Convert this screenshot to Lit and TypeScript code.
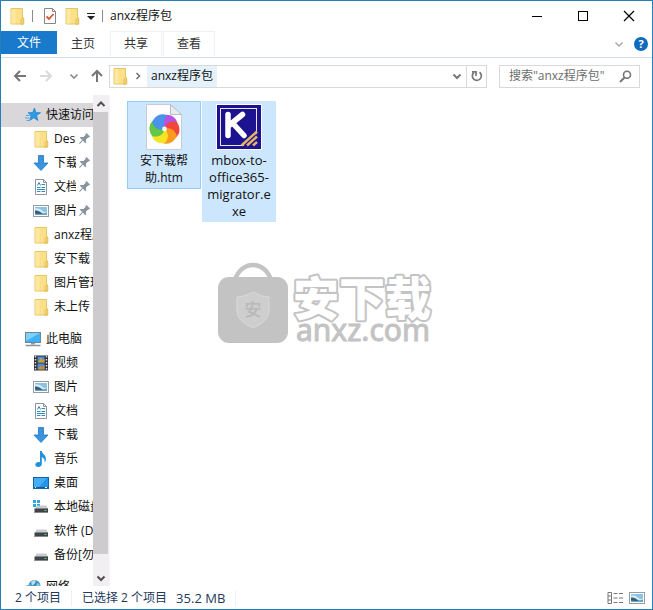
import { LitElement, html, css, svg, nothing, TemplateResult } from "lit";
import { customElement } from "lit/decorators.js";
import { classMap } from "lit/directives/class-map.js";

const icon = (w: number, h: number, body: unknown, vb = `0 0 ${w} ${h}`) =>
  html`<svg class="icon" width=${w} height=${h} viewBox=${vb} aria-hidden="true">${body}</svg>`;

const folder = () =>
  icon(16, 18, svg`
    <path d="M2 1.500H13.500V10l1 1v6H2Z" fill="#fbe08a" stroke="#e5c566"/>
    <path d="M2.500 2h4v14.500h-4Z" fill="#fde8a0"/>
    <path d="M12 17.500V12.500l1.500-1.800 1.300 1v5.300Z" fill="#f4d272" stroke="#dcb957" stroke-width=".8"/>`);

const star = () =>
  icon(16, 16, svg`
    <path d="M9.500 1l1.300 4.500 4.700.3-3.900 2.700 1.300 5-4-2.800-4.300 2.800 1.500-4.800L3 5.700l4.700-.2Z" fill="#2f9be6" stroke="#1b7cc4" stroke-width=".7"/>
    <path d="M1 8.500h3.500M0 11h4M1.500 13.500h2.500M3 6.500h2" stroke="#45a8e8" stroke-width="1"/>`);

const download = () =>
  icon(16, 18, svg`<path d="M5.500 1.500h5v7.500h4.500L8 16.500.9 9h4.600Z" fill="#3a93de" stroke="#2477bd" stroke-width=".8"/>`);

const documentIcon = () =>
  icon(16, 18, svg`
    <path d="M2.500 1.500h8l3 3v12h-11Z" fill="#fff" stroke="#8d949b"/>
    <path d="M10.500 1.500v3h3" fill="none" stroke="#8d949b"/>
    <path d="M4.500 7.500l1.500-3 1.500 3M8.500 6.500h3.500M4 9.500h3.500M8.500 9.500H12M4 11.500h8M4 13.500h3.500M8.500 13.500H12" fill="none" stroke="#2f8abb"/>`);

const picture = () =>
  icon(16, 14, svg`
    <rect x=".5" y="1.500" width="15" height="11" fill="#fff" stroke="#949ca4"/>
    <path d="M2 3h12v8H2Z" fill="#8cc2e8"/>
    <path d="M2 4.500q4-1 7 2t5 1V11H2Z" fill="#d6e9f3"/>
    <path d="M2 6.500q3-.5 6 2t6 0V11H2Z" fill="#2c5f7c"/>
    <path d="M2 9.500q6 1 12-.5V11H2Z" fill="#6fa3bd"/>`);

const computer = () =>
  icon(18, 16, svg`
    <rect x="1.500" y="1.500" width="15" height="10" fill="#3fb2f3" stroke="#6d8494"/>
    <path d="M2 2h14L2 10Z" fill="#7fd0fa"/>
    <path d="M7 12h4v1.500H7Z" fill="#7fa6bd"/>
    <path d="M1.500 14.500h15" stroke="#8c9399" stroke-width="1.500"/>`);

const video = () =>
  icon(16, 16, svg`
    <path d="M1 .5h14v15H1Z" fill="#2c2f36"/>
    <path d="M2.500 1v14M13.500 1v14" stroke="#d9dce0" stroke-width="1.500" stroke-dasharray="1.500 1.500"/>
    <path d="M4.500 1.500h7v6h-7Z" fill="#4c8dd6"/><path d="M4.500 8.500h7v6h-7Z" fill="#4c8dd6"/>
    <path d="M5 7l3-4.500L10 5l1.500-1v3.500H5Z" fill="#d19d3c"/>
    <path d="M5 14l2-3.500L9 12l2.500-2v4.500H5Z" fill="#c58c3a"/>`);

const music = () =>
  icon(16, 18, svg`
    <path d="M7 1h1.800c.3 3.500 5.200 4 4 9.500-.4 1-.8 1.500-1.300 2 .8-3-.8-4.500-2.700-5.200V14c0 1.800-1.700 3-3.600 3S2.300 16 2.300 14.500 4 12 5.700 12c.5 0 .9 0 1.300.2Z" fill="#1e90dc"/>`);

const desktop = () =>
  icon(16, 14, svg`
    <rect x=".5" y="1.500" width="15" height="11" fill="#1f96ec" stroke="#1464a8"/>
    <path d="M1 2h13L6 11H1Z" fill="#45adf5"/><path d="M1 11.500h14" stroke="#125a98"/>
    <path d="M2 11.500h1M12 11.500h2" stroke="#fff"/>`);

const drive = (system = false) =>
  icon(16, 18, svg`
    ${system ? svg`<path d="M0 2h3v3H0ZM4 2h3v3H4ZM0 6h3v3H0ZM4 6h3v3H4Z" fill="#2ba9dc"/>` : nothing}
    <path d="M3.500 7.500h10l1.500 3.500H2Z" fill="#c9cccf"/>
    <path d="M1.500 10.500h13.500v4.500H1.500Z" fill="#3f4347"/>
    <path d="M1.500 14.500h13.500" stroke="#85898d"/><path d="M11.500 12.500h2" stroke="#56dd6b"/>`);

const network = () =>
  icon(16, 16, svg`
    <circle cx="9.500" cy="7" r="6" fill="#3d8fc0"/>
    <path d="M6 3q3-2.500 5-1.500L9.500 5 7 6.500Z" fill="#b9def0"/><path d="M12 4l2.500 1v4l-3-2Z" fill="#8cc8e4"/>
    <path d="M0 7l6-2v6H0Z" fill="#5faed8"/>`);

const pin = () =>
  icon(12, 12, svg`
    <g transform="rotate(45 6 6)" fill="#8a949e"><path d="M3.500 0h5v1.500L7.800 2v3L10 7v1H2V7l2.200-2V2l-.7-.5Z"/><path d="M5.500 8h1v4.500h-1Z"/></g>`);

const chevron = (dir: "up" | "down" | "right", color: string, weight = 2) => {
  const d = { up: "M1.500 7 5 3.500 8.500 7", down: "M1.500 3.500 5 7 8.500 3.500", right: "M3.500 2 6.500 5 3.500 8" }[dir];
  return icon(10, 10, svg`<path d=${d} fill="none" stroke=${color} stroke-width=${weight}/>`);
};

const arrow = (angle: number, color: string) =>
  icon(14, 14, svg`<path transform="rotate(${angle} 7 7)" d="M13 7H2M7 2 2 7l5 5" fill="none" stroke=${color} stroke-width="2"/>`);

const checkedPage = () =>
  icon(14, 18, svg`
    <path d="M1.500 1.500h8l3 3v12h-11Z" fill="#fff" stroke="#868686"/><path d="M9.500 1.500v3h3" fill="none" stroke="#868686"/>
    <path d="M3.500 9.500l2.500 2.500 4.500-5" fill="none" stroke="#d9552b" stroke-width="1.800"/>`);

const petals = ["#b653e2", "#f2453c", "#fa9a1e", "#f7e224", "#62c743", "#4b93ea"];

const htmFile = () =>
  icon(36, 46, svg`
    <path d="M.5.5h24l11 10v35H.5Z" fill="#fdfdfd" stroke="#c6ccd2"/>
    <path d="M24.500.5v10h11Z" fill="#e9ecef" stroke="#b8bfc6"/>
    ${petals.map((c, i) => svg`<path transform="translate(18.500 25) rotate(${i * 60 + 8})" d="M0 0C-5-3-6-9-2-14 5-16 12-12 12-6 8-7 4-5 0 0Z" fill=${c}/>`)}
    <circle cx="18.500" cy="25" r="2.400" fill="#fff"/>`);

const exeFile = () =>
  icon(46, 46, svg`
    <rect width="46" height="46" fill="#fff"/><rect x="1" y="1" width="44" height="44" fill="#1d1390"/>
    <rect x="4.500" y="4.500" width="36" height="37" fill="none" stroke="#e8e6f5"/>
    <path d="M12 10.500v21M26.500 10.500 13 21.500M17 19.500l11 12" fill="none" stroke="#fff" stroke-width="5.500" stroke-linecap="round"/>
    <path d="M24 45 45 26v19H24Z" fill="#1d1390"/>
    <path d="M25.500 41.500 41 27.500M31 41.500l10-9M37 41.500l4-3.500" stroke="#e3b368" stroke-width="2.500"/>`);

interface NavItem { label: string; glyph: () => TemplateResult; pinned?: boolean }
interface NavGroup { label: string; glyph: () => TemplateResult; current?: boolean; items: NavItem[] }

const groups: NavGroup[] = [
  { label: "快速访问", glyph: star, current: true, items: [
    { label: "Desktop", glyph: folder, pinned: true },
    { label: "下载", glyph: download, pinned: true },
    { label: "文档", glyph: documentIcon, pinned: true },
    { label: "图片", glyph: picture, pinned: true },
    { label: "anxz程序包", glyph: folder },
    { label: "安下载", glyph: folder },
    { label: "图片管理", glyph: folder },
    { label: "未上传", glyph: folder },
  ] },
  { label: "此电脑", glyph: computer, items: [
    { label: "视频", glyph: video },
    { label: "图片", glyph: picture },
    { label: "文档", glyph: documentIcon },
    { label: "下载", glyph: download },
    { label: "音乐", glyph: music },
    { label: "桌面", glyph: desktop },
    { label: "本地磁盘", glyph: () => drive(true) },
    { label: "软件 (D:)", glyph: () => drive() },
    { label: "备份[勿删]", glyph: () => drive() },
  ] },
  { label: "网络", glyph: network, items: [] },
];

const files = [
  { lines: ["安下载帮", "助.htm"], glyph: htmFile, focused: true },
  { lines: ["mbox-to-", "office365-", "migrator.e", "xe"], glyph: exeFile, focused: false, latin: true },
];

@customElement("app-root")
export class AppRoot extends LitElement {
  static styles = css`
    :host {
      display: flex; flex-direction: column; box-sizing: border-box; height: 100vh;
      border: 1px solid #2380b8; background: #fff; color: #111; overflow: hidden;
      font: 12px/16px "Open Sans", "Noto Sans CJK SC", sans-serif;
    }
    * { box-sizing: border-box; }
    button, input { font: inherit; color: inherit; margin: 0; padding: 0; border: 0; background: none; }
    button { display: flex; align-items: center; justify-content: center; }
    a { color: inherit; text-decoration: none; }
    .icon { display: block; flex: none; }

    .title { display: flex; align-items: center; height: 30px; padding-left: 8px; flex: none; }
    .title .divider { width: 1px; height: 12px; background: #8a8a8a; }
    .quick { display: flex; align-items: center; gap: 7px; }
    .quick .page { margin-left: 3px; }
    .name { margin: 0 0 0 7px; font: inherit; flex: 1; }
    .window { width: 46px; height: 30px; }

    .ribbon { display: flex; height: 27px; flex: none; border-bottom: 1px solid #d5dee6; }
    .tab { width: 52px; height: 25px; margin-left: 1px; border: 1px solid #eef0f3; border-bottom: 0; color: #333; }
    .tab.file { width: 56px; height: 23px; border: 0; background: #1979ca; color: #fff; margin: 0; }
    .tab.home { border-color: transparent; margin: 0; }
    .ribbon .end { display: flex; align-items: center; gap: 10px; margin-left: auto; padding-right: 4px; }

    .bar { display: flex; align-items: center; height: 36px; flex: none; padding: 0 12px; }
    .steps { display: flex; align-items: center; width: 96px; gap: 12px; }
    .steps .recent { margin-left: 4px; }
    .steps .up { margin-left: -1px; }
    .address { display: flex; align-items: center; flex: 1; min-width: 0; height: 23px; border: 1px solid #d9d9d9; padding-left: 2px; }
    .sep { margin-left: 5px; }
    .crumb { display: flex; align-items: center; height: 21px; padding: 0 4px; margin-left: 4px; background: #e5f1fb; }
    .address .more { margin-left: auto; width: 19px; height: 21px; }
    .address .refresh { width: 20px; height: 21px; border-left: 1px solid #d9d9d9; }
    .search { display: flex; align-items: center; width: 141px; height: 23px; margin-left: 12px; padding: 0 7px 0 9px; border: 1px solid #d9d9d9; }
    .search input { flex: 1; min-width: 0; outline: 0; }
    .search input::placeholder { color: #6d6d6d; opacity: 1; }

    .main { display: flex; flex: 1; min-height: 0; padding-top: 1px; }
    .nav { width: 92px; padding-top: 8px; overflow: hidden; flex: none; }
    .group { margin-bottom: 8px; }
    .row { display: flex; align-items: center; height: 24px; padding-left: 32px; gap: 5px; white-space: nowrap; overflow: hidden; }
    .row.head { padding-left: 24px; }
    .row.current { background: #d9d7d9; }
    .row .glyph { display: flex; justify-content: center; width: 16px; flex: none; }
    .row .label { min-width: 0; overflow: hidden; }
    .row .label.short { width: 22px; }
    .row .pin { margin-left: -3px; }
    .scroll { display: flex; flex-direction: column; width: 16px; background: #f1eff1; flex: none; }
    .scroll button { height: 17px; width: 15px; flex: none; }
    .thumb { flex: 1; width: 15px; margin-bottom: 15px; background: #cdcbcd; }

    .pane { position: relative; flex: 1; min-width: 0; border-left: 1px solid #f5f5f5; padding: 6px 17px; }
    .files { display: flex; flex-wrap: wrap; align-items: flex-start; gap: 1px; }
    .item { flex-direction: column; width: 74px; padding: 3px 0 2px; background: #cce6fd; border: 1px solid #cce6fd; border-width: 0 1px; line-height: 17px; }
    .item.focused { border: 1px solid #98cdf3; padding: 2px 0; }
    .item .caption { margin-top: 2px; }
    .latin { font-size: 13px; }
    .mark { position: absolute; left: 107px; top: 166px; }
    .mark text { font-family: "Noto Sans", "Noto Sans CJK SC", sans-serif; }
    .mark .outlined { paint-order: stroke; }

    .status { display: flex; align-items: center; height: 23px; flex: none; padding: 0 7px 0 14px; color: #1e395b; }
    .status .count { padding-right: 10px; border-right: 1px solid #f0f0f0; margin-right: 10px; }
    .status .size { margin-left: 9px; padding-right: 10px; border-right: 1px solid #f0f0f0; }
    .status .views { display: flex; gap: 6px; margin-left: auto; }
  `;

  private row(item: NavItem) {
    return html`<a class="row" href="#">
      <span class="glyph">${item.glyph()}</span>
      <span class=${classMap({ label: true, short: !!item.pinned })}>${item.label}</span>
      ${item.pinned ? html`<span class="pin">${pin()}</span>` : nothing}
    </a>`;
  }

  render() {
    return html`
      <header class="title">
        <div class="quick">
          ${folder()}<span class="divider"></span>
          <button class="page" aria-label="属性">${checkedPage()}</button>
          <button aria-label="新建文件夹">${folder()}</button>
          <button aria-label="自定义">${icon(8, 10, svg`<path d="M0 2.500h8" stroke="#222"/><path d="M0 5h8L4 9Z" fill="#222"/>`)}</button>
          <span class="divider"></span>
        </div>
        <h1 class="name">anxz程序包</h1>
        <button class="window" aria-label="最小化">${icon(12, 12, svg`<path d="M1 6.500h10" stroke="#000"/>`)}</button>
        <button class="window" aria-label="最大化">${icon(12, 12, svg`<rect x="1.500" y="1.500" width="9" height="9" fill="none" stroke="#000"/>`)}</button>
        <button class="window" aria-label="关闭">${icon(12, 12, svg`<path d="M1 1l10 10M11 1 1 11" stroke="#000" stroke-width="1.200"/>`)}</button>
      </header>

      <nav class="ribbon">
        <button class="tab file">文件</button>
        <button class="tab home">主页</button>
        <button class="tab">共享</button>
        <button class="tab">查看</button>
        <div class="end">
          <button aria-label="展开功能区">${chevron("down", "#a5a5a5", 1.3)}</button>
          <button aria-label="帮助">
            <svg class="icon" width="14" height="14" viewBox="0 0 14 14"><circle cx="7" cy="7" r="7" fill="#0f6cbd"/>
              <text x="7" y="11" text-anchor="middle" font-size="11" font-weight="700" fill="#fff">?</text></svg>
          </button>
        </div>
      </nav>

      <div class="bar">
        <div class="steps">
          <button aria-label="后退">${arrow(0, "#757575")}</button>
          <button aria-label="前进">${arrow(180, "#dadada")}</button>
          <button class="recent" aria-label="最近位置">${chevron("down", "#8a8a8a", 1.6)}</button>
          <button class="up" aria-label="向上">${arrow(90, "#757575")}</button>
        </div>
        <div class="address">
          ${folder()}<span class="sep">${chevron("right", "#6f6f6f", 1.5)}</span>
          <a class="crumb" href="#">anxz程序包</a>
          <button class="more" aria-label="展开地址">${chevron("down", "#777")}</button>
          <button class="refresh" aria-label="刷新">${icon(12, 12, svg`<path d="M2.800 2.500A4.500 4.500 0 1 0 8.500 2.200" fill="none" stroke="#777" stroke-width="1.700"/><path d="M1 1.800H5V6" fill="none" stroke="#777" stroke-width="1.700"/>`)}</button>
        </div>
        <label class="search">
          <input type="text" aria-label="搜索" placeholder='搜索"anxz程序包"' />
          ${icon(13, 13, svg`<circle cx="8" cy="4.800" r="3.500" fill="none" stroke="#777" stroke-width="1.600"/><path d="M5.500 7.500 1 12" stroke="#777" stroke-width="2"/>`)}
        </label>
      </div>

      <div class="main">
        <nav class="nav">
          ${groups.map((g) => html`<div class="group">
            <a class=${classMap({ row: true, head: true, current: !!g.current })} href="#">
              <span class="glyph">${g.glyph()}</span><span class="label">${g.label}</span>
            </a>
            ${g.items.map((i) => this.row(i))}
          </div>`)}
        </nav>
        <div class="scroll">
          <button aria-label="向上滚动">${chevron("up", "#505050")}</button>
          <div class="thumb"></div>
          <button aria-label="向下滚动">${chevron("down", "#505050")}</button>
        </div>
        <main class="pane">
          <div class="files">
            ${files.map((f) => html`<button class=${classMap({ item: true, focused: f.focused })}>
              ${f.glyph()}
              <span class=${classMap({ caption: true, latin: !!f.latin })}>${f.lines.map((l, i) => html`${i ? html`<br />` : nothing}${l}`)}</span>
            </button>`)}
          </div>
          <svg class="mark" width="220" height="84" viewBox="0 0 220 84">
            <path d="M18 19C24-1 48-1 54 19" fill="none" stroke="#c3c3c3" stroke-width="4.500"/>
            <rect x="1" y="16" width="70" height="66" rx="11" fill="#c3c3c3"/>
            <path d="M36 31q8 5 16 5v14q0 10-16 17-16-7-16-17V36q8 0 16-5Z" fill="#cecece" stroke="#d9d9d9"/>
            <text x="36" y="55" text-anchor="middle" font-size="17" font-weight="500" fill="#b8b8b8">安</text>
            <text class="outlined" x="76" y="54" font-size="46" font-weight="900" stroke-linejoin="round" fill="#fff" stroke="#c3c3c3" stroke-width="4">安下载</text>
            <text x="79" y="80" font-size="30" fill="#c3c3c3" stroke="#c3c3c3">anxz.com</text>
          </svg>
        </main>
      </div>

      <footer class="status">
        <span class="count">2 个项目</span>
        <span>已选择 2 个项目</span>
        <span class="size latin">35.2 MB</span>
        <div class="views">
          <button aria-label="详细信息">${icon(16, 14, svg`<path d="M1 1.500h3.500v11H1ZM1 5h3.500M1 9h3.500" fill="none" stroke="#777"/><path d="M6.500 2.500h4M12 2.500h4M6.500 7h4M12 7h4M6.500 11.500h4M12 11.500h4" stroke="#777"/>`)}</button>
          <button aria-label="大图标">${picture()}</button>
        </div>
      </footer>
    `;
  }
}
